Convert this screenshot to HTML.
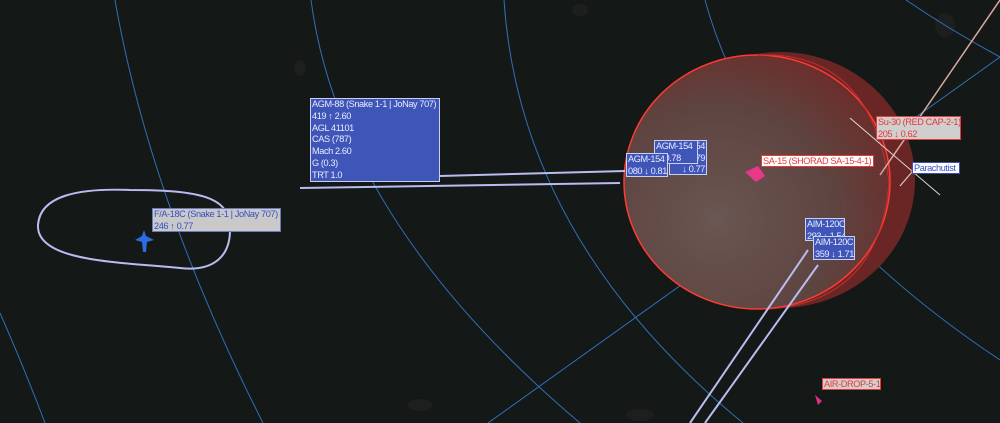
<!DOCTYPE html>
<html><head><meta charset="utf-8"><style>
html,body{margin:0;padding:0;background:#141816;width:1000px;height:423px;overflow:hidden;font-family:"Liberation Sans",sans-serif}
.l{position:absolute;font-size:9.2px;line-height:14px;padding:0 1px;box-sizing:border-box;white-space:nowrap;letter-spacing:-0.4px;overflow:hidden}
.b{background:#3f55b8;color:#e8ecff;border:1px solid #c8d0f0}
.g{background:#c9c9c9;color:#3a4ec0;border:1px solid #6a78c0}
.r{background:#cfcfcf;color:#e83838;border:1px solid #e83838}
.rw{background:#fff;color:#e83838;border:1px solid #e83838}
.pw{background:#fff;color:#3a4ec0;border:1px solid #3a4ec0}
</style></head><body>
<svg width="1000" height="423" style="position:absolute;left:0;top:0">
<defs>
<radialGradient id="cg" cx="0.35" cy="0.65" r="0.75">
<stop offset="0" stop-color="#6a5652"/><stop offset="0.6" stop-color="#5e4440"/><stop offset="1" stop-color="#6e2a28"/></radialGradient>
</defs>
<g fill="#1d1f1f">
<ellipse cx="300" cy="68" rx="6" ry="8"/><ellipse cx="580" cy="10" rx="8" ry="6"/>
<ellipse cx="660" cy="258" rx="5" ry="8"/><ellipse cx="945" cy="25" rx="10" ry="12"/>
<ellipse cx="420" cy="405" rx="12" ry="6"/><ellipse cx="640" cy="415" rx="14" ry="6"/>
</g>
<g fill="none" stroke="#2f6fb8" stroke-width="1">
<path d="M115 0 Q150 200 263 423"/>
<path d="M311 0 Q340 220 580 423"/>
<path d="M504 0 Q520 240 743 423"/>
<path d="M0 313 Q25 370 45 423"/>
<path d="M705 0 Q760 200 1000 360"/>
<path d="M906 0 Q950 30 1000 57"/>
<path d="M488 423 L1000 57"/>
</g>
<ellipse cx="780" cy="180" rx="135" ry="128" fill="#6a2624"/>
<ellipse cx="757" cy="182" rx="133" ry="127" fill="url(#cg)" stroke="#ff3a32" stroke-width="1.5"/>
<path d="M757 55 Q870 50 889 182 Q880 300 770 309" fill="none" stroke="#c03030" stroke-width="1"/>
<g stroke="#b8bcf0" fill="none" stroke-width="2">
<path d="M300 188 L620 183"/>
<path d="M440 176 L625 171"/>
<path d="M130 190 C80 188 40 195 38 225 C36 262 120 262 180 268 C215 272 230 255 230 230 C230 200 210 190 130 190"/>
<path d="M808 250 L690 423"/>
<path d="M818 265 L705 423"/>
</g>
<g stroke="#d9a8a0" stroke-width="1.5"><path d="M1000 0 L880 175"/></g>
<g stroke="#d8d8d8" stroke-width="1"><path d="M850 118 L940 195"/><path d="M912 172 L900 186"/></g>
<path d="M144 230 L146 236 L154 240 L147 242 L146 252 L143 252 L142 242 L135 240 L142 236 Z" fill="#2a6ee0"/>
<path d="M745 172 L758 166 L765 176 L756 182 Z" fill="#e8388a"/>
<path d="M815 395 L822 401 L818 405 Z" fill="#e03080"/>
</svg>
<div class="l b" style="left:310px;top:98px;width:130px;height:84px;line-height:11.8px">AGM-88 (Snake 1-1 | JoNay 707)<br>419 ↑ 2.60<br>AGL 41101<br>CAS (787)<br>Mach 2.60<br>G (0.3)<br>TRT 1.0</div>
<div class="l g" style="left:152px;top:208px;width:129px;height:24px;line-height:11.5px">F/A-18C (Snake 1-1 | JoNay 707)<br>246 ↑ 0.77</div>
<div class="l b" style="left:669px;top:140px;width:38px;height:35px;line-height:11.5px;text-align:right">54<br>79<br>↓ 0.77</div>
<div class="l b" style="left:654px;top:140px;width:44px;height:24px;line-height:11.5px">AGM-154<br>&nbsp;↓ 0.78</div>
<div class="l b" style="left:626px;top:153px;width:42px;height:24px;line-height:11.5px">AGM-154<br>080 ↓ 0.81</div>
<div class="l rw" style="left:761px;top:155px;width:113px;height:12px;line-height:11px">SA-15 (SHORAD SA-15-4-1)</div>
<div class="l r" style="left:876px;top:116px;width:85px;height:24px;line-height:11.5px">Su-30 (RED CAP-2-1)<br>205 ↓ 0.62</div>
<div class="l pw" style="left:912px;top:162px;width:48px;height:12px;line-height:11px">Parachutist</div>
<div class="l b" style="left:805px;top:218px;width:40px;height:23px;line-height:11.5px">AIM-120C<br>293 ↓ 1.54</div>
<div class="l b" style="left:813px;top:236px;width:42px;height:24px;line-height:11.5px">AIM-120C<br>359 ↓ 1.71</div>
<div class="l r" style="left:822px;top:378px;width:59px;height:12px;line-height:11px">AIR-DROP-5-1</div>
</body></html>
